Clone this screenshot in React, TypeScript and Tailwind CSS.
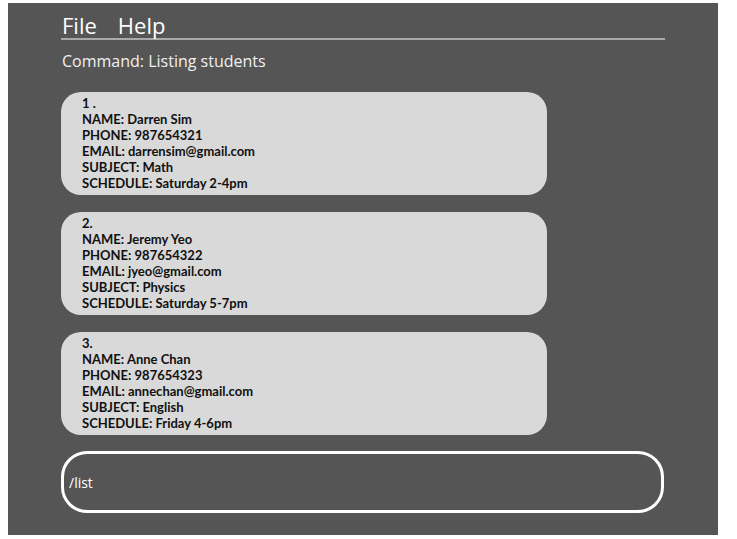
import React from 'react';

const students = [
    { idx: '1 .', name: 'Darren Sim', phone: '987654321', email: 'darrensim@gmail.com', subject: 'Math', schedule: 'Saturday 2-4pm' },
    { idx: '2.', name: 'Jeremy Yeo', phone: '987654322', email: 'jyeo@gmail.com', subject: 'Physics', schedule: 'Saturday 5-7pm' },
    { idx: '3.', name: 'Anne Chan', phone: '987654323', email: 'annechan@gmail.com', subject: 'English', schedule: 'Friday 4-6pm' },
];

const StudentCard = ({ s }: { s: typeof students[number] }) => (
    <div className="w-[486px] h-[103px] rounded-[20px] bg-[#d9d9d9] pl-[21px] pt-[3px] text-[13px] leading-[16px] font-bold text-[#111] font-['Lato',sans-serif]">
        <div>{s.idx}</div>
        <div>NAME: {s.name}</div>
        <div>PHONE: {s.phone}</div>
        <div>EMAIL: {s.email}</div>
        <div>SUBJECT: {s.subject}</div>
        <div>SCHEDULE: {s.schedule}</div>
    </div>
);

export default function App() {
    return (
        <div className="w-[737px] h-[539px] bg-white pt-[3px] pl-[8px]">
            <div className="w-[710px] h-[532px] bg-[#555555] pl-[53px] font-['Open_Sans',sans-serif]">
                <div className="w-[604px] border-b-2 border-[#a9a9a9] flex gap-[21px] pl-[1px] pt-[8px] h-[37px] text-[22px] leading-[28px] font-normal text-white">
                    <span>File</span>
                    <span>Help</span>
                </div>
                <div className="pl-[1px] pt-[10px] text-[16px] leading-[22px] text-[#f0f0f0]">Command: Listing students</div>
                <div className="mt-[20px] flex flex-col gap-[17px]">
                    {students.map((s, i) => (
                        <StudentCard key={i} s={s} />
                    ))}
                </div>
                <div className="mt-[16px] w-[603px] h-[62px] rounded-[26px] border-[3px] border-white flex items-center pl-[5px] text-[14px] text-white">
                    /list
                </div>
            </div>
        </div>
    );
}
